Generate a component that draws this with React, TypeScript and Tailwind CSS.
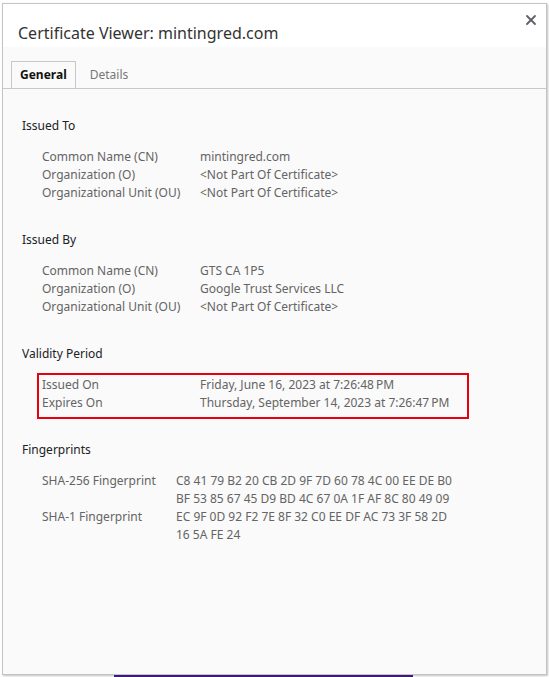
import { X } from "lucide-react";

type Row = { label: string; value: string[] };

const issuedTo: Row[] = [
  { label: "Common Name (CN)", value: ["mintingred.com"] },
  { label: "Organization (O)", value: ["<Not Part Of Certificate>"] },
  { label: "Organizational Unit (OU)", value: ["<Not Part Of Certificate>"] },
];

const issuedBy: Row[] = [
  { label: "Common Name (CN)", value: ["GTS CA 1P5"] },
  { label: "Organization (O)", value: ["Google Trust Services LLC"] },
  { label: "Organizational Unit (OU)", value: ["<Not Part Of Certificate>"] },
];

const validity: Row[] = [
  { label: "Issued On", value: ["Friday, June 16, 2023 at 7:26:48\u202fPM"] },
  { label: "Expires On", value: ["Thursday, September 14, 2023 at 7:26:47\u202fPM"] },
];

const fingerprints: Row[] = [
  {
    label: "SHA-256 Fingerprint",
    value: [
      "C8 41 79 B2 20 CB 2D 9F 7D 60 78 4C 00 EE DE B0",
      "BF 53 85 67 45 D9 BD 4C 67 0A 1F AF 8C 80 49 09",
    ],
  },
  {
    label: "SHA-1 Fingerprint",
    value: ["EC 9F 0D 92 F2 7E 8F 32 C0 EE DF AC 73 3F 58 2D", "16 5A FE 24"],
  },
];

function Rows({ rows, labelWidth }: { rows: Row[]; labelWidth: string }) {
  return (
    <div className="flex flex-col pl-[20px]">
      {rows.map((row) => (
        <div key={row.label} className="flex text-[12px] leading-[18px] text-[#646464]">
          <div className={labelWidth}>{row.label}</div>
          <div className="flex flex-col">
            {row.value.map((v) => (
              <div key={v}>{v}</div>
            ))}
          </div>
        </div>
      ))}
    </div>
  );
}

function Section({
  title,
  children,
}: {
  title: string;
  children: React.ReactNode;
}) {
  return (
    <div className="flex flex-col gap-[13px]">
      <div className="text-[12px] leading-[18px] text-[#202124]">{title}</div>
      {children}
    </div>
  );
}

export default function App() {
  return (
    <div
      className="w-[549px] h-[677px] bg-white overflow-hidden flex flex-col"
      style={{ fontFamily: '"Noto Sans", "Open Sans", sans-serif' }}
    >
      <div className="flex h-[3px]" />
      <div className="ml-[2px] w-[545px] h-[672px] border border-[#c4c4c4] shadow-[1px_1px_2px_rgba(0,0,0,0.25)] bg-[#fafafa] flex flex-col">
        <div className="bg-white h-[43px] flex items-start justify-between pl-[15px] pr-[7px]">
          <div className="text-[16px] leading-[22px] text-[#333] mt-[18px]">
            Certificate Viewer: mintingred.com
          </div>
          <X className="w-[16px] h-[16px] text-[#5f6368] mt-[8px]" strokeWidth={2.8} />
        </div>

        <div className="flex pl-[8px] mt-[14px] border-b border-[#c8c8c8]">
          <div className="h-[27px] px-[8px] border border-b-0 border-[#c8c8c8] bg-[#fafafa] -mb-px flex items-center text-[12px] font-bold text-[#111]">
            General
          </div>
          <div className="h-[27px] px-[14px] flex items-center text-[12px] text-[#777]">
            Details
          </div>
        </div>

        <div className="flex flex-col gap-[29px] pl-[19px] pt-[28px]">
          <Section title="Issued To">
            <Rows rows={issuedTo} labelWidth="w-[158px]" />
          </Section>
          <Section title="Issued By">
            <Rows rows={issuedBy} labelWidth="w-[158px]" />
          </Section>
          <Section title="Validity Period">
            <div className="relative">
              <Rows rows={validity} labelWidth="w-[158px]" />
              <div className="absolute left-[15px] top-[-3px] w-[432px] h-[46px] border-2 border-[#e8000f]" />
            </div>
          </Section>
          <Section title="Fingerprints">
            <Rows rows={fingerprints} labelWidth="w-[134px]" />
          </Section>
        </div>
      </div>
      <div className="ml-[114px] w-[299px] h-[2px] bg-[#3d1a78]" />
    </div>
  );
}
